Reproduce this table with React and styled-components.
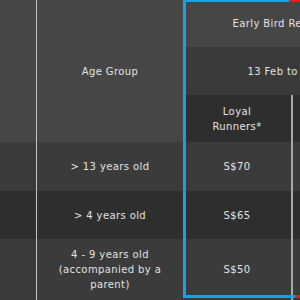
import React from 'react'
import styled, { createGlobalStyle } from 'styled-components'

const GlobalStyle = createGlobalStyle`
  html, body {
    margin: 0;
    padding: 0;
    background: #2e2e2e;
    overflow: hidden;
  }
`

const rows = [
  { age: '> 13 years old', loyal: 'S$70', pub: 'S$80', tone: 'light', h: 49 },
  { age: '> 4 years old', loyal: 'S$65', pub: 'S$75', tone: 'dark', h: 48 },
  { age: ['4 - 9 years old', '(accompanied by a', 'parent)'], loyal: 'S$50', pub: 'S$60', tone: 'light', h: 61 },
]

const tones = {
  header: '#464646',
  mid: '#3a3a3a',
  light: '#3b3b3b',
  dark: '#2e2e2e',
}

export default function App() {
  return (
    <>
      <GlobalStyle />
      <Wrap>
        <Table>
          <Cell $bg={tones.header} $row="1 / span 3" $col="1" $divider />
          <Cell $bg={tones.header} $row="1 / span 3" $col="2">Age Group</Cell>
          <Cell $bg={tones.header} $row="1" $col="3 / span 2">Early Bird Registration</Cell>
          <Cell $bg={tones.mid} $row="2" $col="3 / span 2">13 Feb to 15 Mar</Cell>
          <Cell $bg={tones.dark} $row="3" $col="3" $split>Loyal<br />Runners*</Cell>
          <Cell $bg={tones.dark} $row="3" $col="4">Public</Cell>
          {rows.map((r, i) => (
            <React.Fragment key={i}>
              <Cell $bg={tones[r.tone]} $row={`${i + 4}`} $col="1" $divider />
              <Cell $bg={tones[r.tone]} $row={`${i + 4}`} $col="2">
                {Array.isArray(r.age)
                  ? r.age.map((l, j) => <Line key={j}>{l}</Line>)
                  : r.age}
              </Cell>
              <Cell $bg={tones[r.tone]} $row={`${i + 4}`} $col="3" $split>{r.loyal}</Cell>
              <Cell $bg={tones[r.tone]} $row={`${i + 4}`} $col="4">{r.pub}</Cell>
            </React.Fragment>
          ))}
        </Table>
        <BlueFrame />
        <RedEdge $top />
        <RedEdge />
      </Wrap>
    </>
  )
}

const Wrap = styled.div`
  position: relative;
  width: 300px;
  height: 300px;
  overflow: hidden;
  font-family: "DejaVu Sans", "Verdana", sans-serif;
`

const Table = styled.div`
  display: grid;
  grid-template-columns: 37px 146px 110px 110px;
  grid-template-rows: 47px 48px 47px 49px 48px 61px;
  width: 403px;
  color: #e2e2e2;
  font-size: 10px;
  letter-spacing: 0.4px;
`

const Cell = styled.div`
  grid-row: ${p => p.$row};
  grid-column: ${p => p.$col};
  background: ${p => p.$bg};
  display: flex;
  flex-direction: column;
  align-items: center;
  justify-content: center;
  text-align: center;
  line-height: 15px;
  white-space: nowrap;
  box-sizing: border-box;
  border-right: ${p => (p.$divider ? '1px solid #c4c4c4' : p.$split ? '2px solid #a8a8a8' : 'none')};
`

const Line = styled.span`
  display: block;
`

const BlueFrame = styled.div`
  position: absolute;
  left: 183px;
  top: 0;
  width: 112px;
  height: 298px;
  box-sizing: border-box;
  border: 3px solid #12a5e0;
  border-top-width: 2px;
  border-right: none;
`

const RedEdge = styled.div`
  position: absolute;
  left: ${p => (p.$top ? '289px' : '295px')};
  top: ${p => (p.$top ? '0' : '295px')};
  right: 0;
  height: ${p => (p.$top ? '2px' : '3px')};
  background: #e0201c;
`
